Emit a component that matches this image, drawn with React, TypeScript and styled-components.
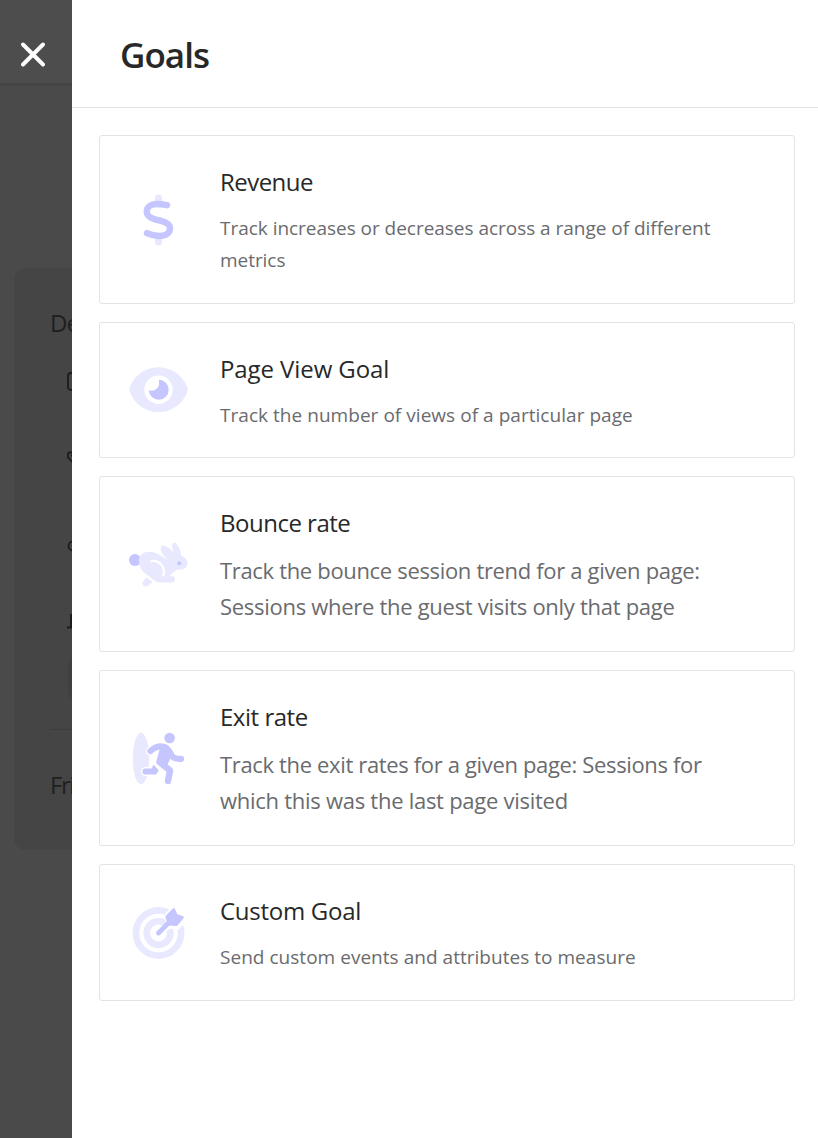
import React from 'react';
import styled, { createGlobalStyle } from 'styled-components';

const GlobalStyle = createGlobalStyle`
  *, *::before, *::after { box-sizing: border-box; }
  body {
    margin: 0;
    background: #fff;
    font-family: 'Open Sans', 'Noto Sans', sans-serif;
    color: #282828;
  }
`;

const Screen = styled.div`
  display: flex;
  height: 1138px;
  overflow: hidden;
`;

const Dimmed = styled.aside`
  position: relative;
  flex: 0 0 72px;
  overflow: hidden;
  background: #4a4a4a;
`;

const DimmedBar = styled.div`
  height: 84px;
  background: #4d4d4d;
  border-bottom: 1px solid #434343;
  box-shadow: 0 1px 2px rgba(0, 0, 0, 0.12);
`;

const CloseButton = styled.button`
  position: absolute;
  left: 20px;
  top: 42px;
  width: 26px;
  height: 26px;
  padding: 0;
  border: 0;
  background: none;
  svg { display: block; }
`;

const DimmedCard = styled.div`
  width: 400px;
  height: 582px;
  margin: 184px 0 0 14px;
  padding: 37px 36px 0;
  border-radius: 12px;
  background: #454545;
`;

const DimmedText = styled.div<{ $track: number }>`
  height: 36px;
  font-size: 24px;
  line-height: 36px;
  letter-spacing: ${(p) => p.$track}px;
  color: #1f1f20;
`;

const DimmedIcons = styled.div`
  height: 386px;
  padding-left: 17px;
  svg { display: block; }
`;

const DimmedRule = styled.div`
  height: 1px;
  margin: 2px 0 37px;
  background: #3c3c3c;
`;

const Drawer = styled.main`
  flex: 1;
  background: #fff;
`;

const Header = styled.header`
  display: flex;
  align-items: center;
  height: 108px;
  padding: 3px 0 0 48px;
  border-bottom: 1px solid #e2e2e2;
`;

const Heading = styled.h1`
  margin: 0;
  font-size: 35px;
  line-height: 48px;
  font-weight: 600;
  letter-spacing: -0.95px;
`;

const GoalList = styled.div`
  display: flex;
  flex-direction: column;
  gap: 18px;
  padding: 27px 23px 0 27px;
`;

const GoalCard = styled.article<{ $height: number }>`
  display: flex;
  height: ${(p) => p.$height}px;
  border: 1px solid #e3e3e3;
  border-radius: 3px;
`;

const IconCell = styled.div`
  display: flex;
  flex: 0 0 120px;
  align-items: center;
  padding-left: 20px;
`;

const GoalBody = styled.div`
  padding-top: 28px;
`;

const GoalTitle = styled.h2<{ $large?: boolean; $track: number }>`
  margin: 0 0 ${(p) => (p.$large ? 11 : 12)}px;
  font-size: 24px;
  line-height: 36px;
  font-weight: 400;
  letter-spacing: ${(p) => p.$track}px;
`;

const Line = styled.span<{ $large?: boolean; $track: number }>`
  display: block;
  white-space: nowrap;
  font-size: ${(p) => (p.$large ? 22 : 19)}px;
  line-height: ${(p) => (p.$large ? 36 : 32)}px;
  letter-spacing: ${(p) => p.$track}px;
  color: #6a6b6e;
`;

const STRONG = '#c5c5ff';
const SOFT = '#e8e8ff';

const Icon = ({ children }: { children: React.ReactNode }) => (
  <svg width="80" height="80" viewBox="0 0 80 80" fill="none" strokeLinecap="round" strokeLinejoin="round">
    {children}
  </svg>
);

const DollarIcon = () => (
  <Icon>
    <path d="M38.500 18v6M38.500 58v4" stroke={SOFT} strokeWidth="7" />
    <path
      d="M47 25.200c-4-.8-7-1.200-10-1.200-6.500 0-10.300 3.400-10.300 7.600 0 4.400 3.300 6.400 8.300 7.700l6 1.500c5.500 1.400 9 3.300 9 7.400 0 4.600-4.200 7.800-11 7.800-4.500 0-8.500-1.100-12-2.800"
      stroke={STRONG}
      strokeWidth="6.400"
    />
  </Icon>
);

const EyeIcon = () => (
  <Icon>
    <path
      fillRule="evenodd"
      fill={SOFT}
      d="M38.500 17.300c14.500 0 24.700 9.500 28.600 19.500.8 2 .8 3.700 0 5.600C63.200 52.500 53 62 38.500 62S13.800 52.500 10.100 42.400c-.8-2-.8-3.700 0-5.600 3.700-10 13.900-19.500 28.400-19.500zM38.500 25.500a14.200 14.200 0 1 0 0 28.400 14.200 14.200 0 0 0 0-28.400z"
    />
    <path fill={STRONG} d="M39 29.700a10 10 0 1 1-10.300 10.600c1 .4 2 .5 3 .4 5-.3 8-4 7.300-8.500-.1-.9 0-1.700 0-2.500z" />
  </Icon>
);

const RabbitIcon = () => (
  <Icon>
    <g transform="translate(0 1)">
      <circle cx="15" cy="35" r="6" fill={STRONG} />
      <path
        fill={SOFT}
        d="M19 35c0-5 5-8.500 11-8.300 5 .2 9 2.500 13 5.300l4.700 3.300c-4-5.300-7.400-8.300-7-12.300.2-2 1.300-2.700 3-2.300 4 1 7.500 3.500 10.300 7.300-2-4.500-2.700-7.500-1.200-9.700.8-1.100 2-1 3 0 3.500 3.400 5.200 7.700 5.200 12.200 4 1.500 6.500 4.500 6.500 7.500 0 4.700-4.500 7-9.500 6.500-2.500 1-5.500 3.200-8.500 6.500h2.500c2 0 3 1.400 3 3.200 0 1.900-1.200 3.300-3.200 3.300H40c-2.500 0-4-.8-5.500-2l-10.500-8c-3.500-2.800-5-8-5-12.500z"
      />
      <path fill={SOFT} d="M26.500 52.500l6 4.400-3.800 3.300c-1.900 1.700-4.200 1.700-5.500.1-1.300-1.700-.8-3.300.6-5z" />
      <path d="M31.500 36.300c3-1.300 8.500.5 11 5 2.300 3.700 1.500 6.700.8 9" stroke="#fff" strokeWidth="2.300" />
      <circle cx="59.200" cy="38.300" r="2" fill={STRONG} />
    </g>
  </Icon>
);

const ExitIcon = () => (
  <Icon>
    <g transform="translate(0 2)">
      <ellipse cx="21" cy="38.500" rx="8.200" ry="25.700" fill={SOFT} />
      <path d="M25.500 51.500H34M30.500 31l4-2.500" stroke="#fff" strokeWidth="9" />
      <circle cx="49.600" cy="18" r="5.300" fill={STRONG} />
      <g stroke={STRONG}>
        <path d="M30.500 31c4-3.500 8-5.300 13-4.300 4.500.8 6 5 8 8.500 1.500 2.700 4.500 3.800 9.500 3.600" strokeWidth="6.200" />
        <path d="M43 29.500L39.500 42l10.500 8.500-2 10.500" strokeWidth="6.500" />
        <path d="M44 30l-1 10M49 33l-5 11" strokeWidth="7" />
        <path d="M25.500 51.500h8.700" strokeWidth="6.200" />
      </g>
      <path fill={STRONG} d="M33.500 44.500l5 5.500c-.8 2.800-2.300 4.600-4.500 4.600l-2.500-5.400z" />
    </g>
  </Icon>
);

const TargetIcon = () => (
  <Icon>
    <circle cx="38.500" cy="40" r="22.600" stroke={SOFT} strokeWidth="6.600" />
    <circle cx="38.500" cy="40" r="11.800" stroke={SOFT} strokeWidth="6.600" />
    <path d="M38.500 40L48 30.500l-1.500-7.500 8-9.500 4 8 8 4-9 9-8-1z" fill="#fff" stroke="#fff" strokeWidth="4.500" />
    <path d="M38.500 40L51 27.500" stroke={STRONG} strokeWidth="4.800" />
    <path
      d="M46.500 23.500l7.300-7.200 2.500 5.800 6.300 2.300-6.300 7.500-7.500-.6z"
      fill={STRONG}
      stroke={STRONG}
      strokeWidth="2.400"
    />
  </Icon>
);

type TextLine = { text: string; track: number };
type Goal = {
  title: string;
  titleTrack: number;
  height: number;
  large?: boolean;
  lines: TextLine[];
  icon: React.ReactNode;
};

const goals: Goal[] = [
  {
    title: 'Revenue',
    titleTrack: -0.55,
    height: 169,
    lines: [
      { text: 'Track increases or decreases across a range of different', track: -0.03 },
      { text: 'metrics', track: -0.05 },
    ],
    icon: <DollarIcon />,
  },
  {
    title: 'Page View Goal',
    titleTrack: -0.09,
    height: 136,
    lines: [{ text: 'Track the number of views of a particular page', track: 0.04 }],
    icon: <EyeIcon />,
  },
  {
    title: 'Bounce rate',
    titleTrack: -0.5,
    height: 176,
    large: true,
    lines: [
      { text: 'Track the bounce session trend for a given page:', track: -0.33 },
      { text: 'Sessions where the guest visits only that page', track: -0.29 },
    ],
    icon: <RabbitIcon />,
  },
  {
    title: 'Exit rate',
    titleTrack: -0.47,
    height: 176,
    large: true,
    lines: [
      { text: 'Track the exit rates for a given page: Sessions for', track: -0.35 },
      { text: 'which this was the last page visited', track: -0.27 },
    ],
    icon: <ExitIcon />,
  },
  {
    title: 'Custom Goal',
    titleTrack: -0.27,
    height: 137,
    lines: [{ text: 'Send custom events and attributes to measure', track: 0.03 }],
    icon: <TargetIcon />,
  },
];

export default function App() {
  return (
    <Screen>
      <GlobalStyle />
      <Dimmed>
        <DimmedBar />
        <DimmedCard>
          <DimmedText $track={-1}>De</DimmedText>
          <DimmedIcons>
            <svg width="60" height="386" viewBox="0 0 60 386" fill="none" stroke="#1c1c1e" strokeWidth="1.800">
              <rect x="1" y="32" width="16" height="17" rx="3" />
              <path d="M9 111.500H2.500Q1 111.500 1 113v3.500l6 6M4 114.500h1" />
              <circle cx="6" cy="205" r="4.500" />
              <path d="M4 273v13M0 286.500h5" strokeWidth="2" />
              <rect x="1" y="317" width="56" height="41" rx="6" fill="#404040" stroke="none" />
            </svg>
          </DimmedIcons>
          <DimmedRule />
          <DimmedText $track={-1.5}>Fri</DimmedText>
        </DimmedCard>
        <CloseButton aria-label="Close">
          <svg width="26" height="26" viewBox="0 0 26 26" stroke="#fff" strokeWidth="3.900" strokeLinecap="round">
            <path d="M3 2.500l20 20M23 2.500l-20 20" />
          </svg>
        </CloseButton>
      </Dimmed>
      <Drawer>
        <Header>
          <Heading>Goals</Heading>
        </Header>
        <GoalList>
          {goals.map((goal) => (
            <GoalCard key={goal.title} $height={goal.height}>
              <IconCell>{goal.icon}</IconCell>
              <GoalBody>
                <GoalTitle $large={goal.large} $track={goal.titleTrack}>
                  {goal.title}
                </GoalTitle>
                {goal.lines.map((line) => (
                  <Line key={line.text} $large={goal.large} $track={line.track}>
                    {line.text}
                  </Line>
                ))}
              </GoalBody>
            </GoalCard>
          ))}
        </GoalList>
      </Drawer>
    </Screen>
  );
}
